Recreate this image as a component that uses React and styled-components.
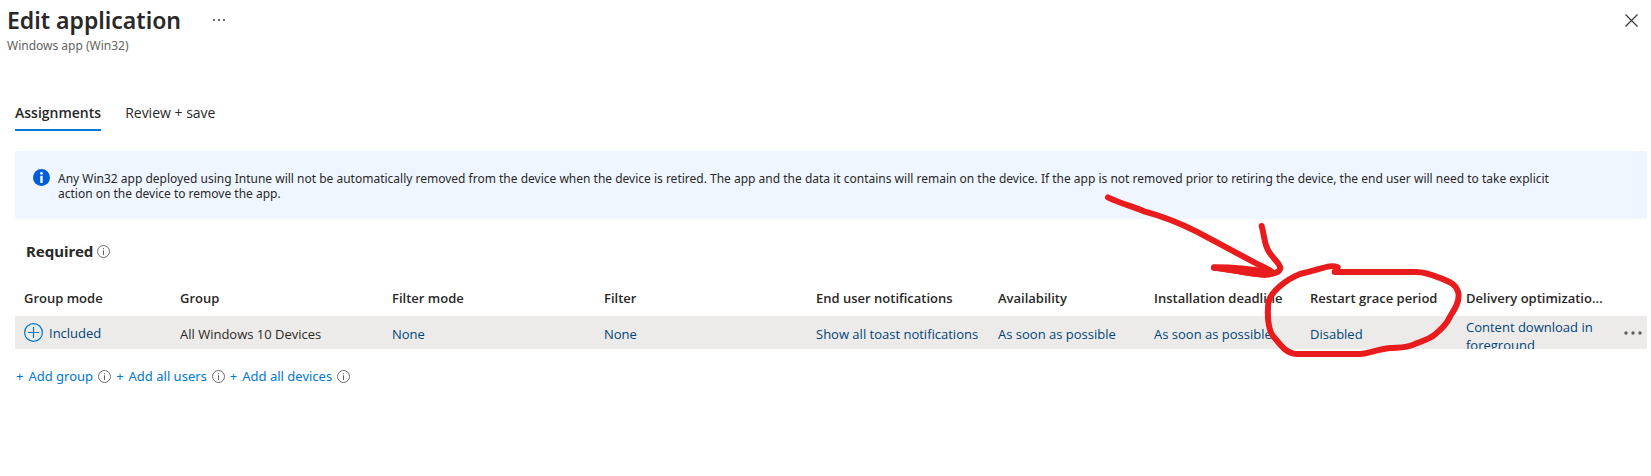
import React from 'react';
import styled, { createGlobalStyle } from 'styled-components';

const GlobalStyle = createGlobalStyle`
  * { box-sizing: border-box; }
  body {
    margin: 0;
    background: #ffffff;
    color: #292827;
    font-family: "Noto Sans", "Open Sans", sans-serif;
    font-size: 13px;
  }
  button {
    border: 0;
    padding: 0;
    background: none;
    font: inherit;
    color: inherit;
    cursor: pointer;
  }
`;

const Page = styled.div`
  position: relative;
  min-width: 1100px;
`;

const Header = styled.header`
  display: flex;
  justify-content: space-between;
  align-items: flex-start;
  padding: 4px 8px 0 7px;
`;

const TitleRow = styled.div`
  display: flex;
  align-items: center;
  gap: 30px;
`;

const Title = styled.h1`
  margin: 0;
  font-size: 23px;
  line-height: 30px;
  font-weight: 600;
`;

const Subtitle = styled.p`
  margin: 0;
  font-size: 12px;
  line-height: 20px;
  color: #646260;
`;

const IconButton = styled.button`
  display: flex;
  align-items: center;
  justify-content: center;
  width: ${(p) => p.$width || 16}px;
  height: 32px;
`;

const Tabs = styled.div`
  display: flex;
  gap: 24px;
  margin-top: 40px;
  padding: 0 15px;
`;

const Tab = styled.button`
  && {
    padding: 6px 0 5px;
    border-bottom: 2px solid ${(p) => (p.$active ? '#0078d4' : 'transparent')};
    font-size: 14px;
    line-height: 22px;
    font-family: "Open Sans", "Noto Sans", sans-serif;
    font-weight: ${(p) => (p.$active ? 600 : 400)};
  }
`;

const Main = styled.main`
  padding: 20px 4px 0 15px;
`;

const Notice = styled.section`
  display: flex;
  align-items: flex-start;
  gap: 8px;
  padding: 18px 64px 18px 18px;
  border-radius: 2px;
  background: #eff6ff;
`;

const IconSlot = styled.span`
  display: flex;
  flex: none;
`;

const NoticeText = styled.p`
  margin: 0;
  padding: 2px 0 0;
  font-size: 12px;
  line-height: 15px;
`;

const SectionTitle = styled.h2`
  display: flex;
  align-items: center;
  gap: 4px;
  margin: 0;
  padding: 20px 11px 0;
  font-size: 15px;
  line-height: 24px;
  font-weight: 700;
`;

const Table = styled.table`
  width: 100%;
  margin-top: 16px;
  table-layout: fixed;
  border-collapse: collapse;
  font-family: "Open Sans", "Noto Sans", sans-serif;
`;

const Col = styled.col`
  width: ${(p) => p.$width}px;
`;

const HeadCell = styled.th`
  height: 37px;
  padding: 0 4px 0 9px;
  text-align: left;
  font-weight: 600;
  line-height: 18px;
  overflow: hidden;
  white-space: nowrap;
  text-overflow: ellipsis;
`;

const BodyRow = styled.tr`
  background: #edebe9;
`;

const Cell = styled.td`
  height: 33px;
  padding: 0 0 0 9px;
  vertical-align: middle;
`;

const CellContent = styled.div`
  display: flex;
  align-items: center;
  gap: 6px;
  padding-top: ${(p) => (p.$icon ? 0 : 2)}px;
  line-height: 18px;
`;

const TwoLineContent = styled.div`
  height: 33px;
  padding: 2px 8px 0 0;
  line-height: 18px;
  overflow: hidden;
`;

const CellLink = styled.a`
  color: #004578;
  text-decoration: none;
  white-space: ${(p) => (p.$wrap ? 'normal' : 'nowrap')};
`;

const Actions = styled.div`
  display: flex;
  align-items: center;
  gap: 5px;
  padding: 18px 1px 0;
  font-size: 13px;
  line-height: 18px;
`;

const AddLink = styled.a`
  display: flex;
  gap: 5px;
  color: #0078d4;
  text-decoration: none;
`;

const Ink = styled.svg`
  position: absolute;
  top: 180px;
  right: 171px;
  width: 400px;
  height: 190px;
  pointer-events: none;
`;

const InfoOutline = () => (
  <svg width="13" height="13" viewBox="0 0 13 13" fill="none" stroke="#605e5c" aria-hidden="true">
    <circle cx="6.5" cy="6.5" r="6" strokeWidth="0.9" />
    <path d="M6.5 5.4V10M6.5 3.2V4.3" />
  </svg>
);

const InfoSolid = () => (
  <svg width="17" height="17" viewBox="0 0 17 17" aria-hidden="true">
    <circle cx="8.5" cy="8.5" r="8.5" fill="#015cda" />
    <circle cx="8.5" cy="4.3" r="1.4" fill="#fff" />
    <path d="M7.3 6.8h2.4v7.2H7.3z" fill="#fff" />
  </svg>
);

const PlusCircle = () => (
  <svg width="19" height="19" viewBox="0 0 19 19" fill="none" stroke="#0078d4" aria-hidden="true">
    <circle cx="9.5" cy="9.5" r="8.9" strokeWidth="1.2" />
    <path d="M9.5 4v11M4 9.5h11" strokeWidth="1.2" />
  </svg>
);

const Dots = ({ width, height, r, step, color }) => (
  <svg width={width} height={height} viewBox={`0 0 ${width} ${height}`} fill={color} aria-hidden="true">
    {[-1, 0, 1].map((i) => (
      <circle key={i} cx={width / 2 + i * step} cy={height / 2} r={r} />
    ))}
  </svg>
);

const columns = [
  ['Group mode', 156],
  ['Group', 212],
  ['Filter mode', 212],
  ['Filter', 212],
  ['End user notifications', 182],
  ['Availability', 156],
  ['Installation deadline', 156],
  ['Restart grace period', 156],
  ['Delivery optimization priority', 156],
];

const linkCells = [
  'None',
  'None',
  'Show all toast notifications',
  'As soon as possible',
  'As soon as possible',
  'Disabled',
];

const addLinks = ['Add group', 'Add all users', 'Add all devices'];

export default function App() {
  return (
    <Page>
      <GlobalStyle />
      <Header>
        <div>
          <TitleRow>
            <Title>Edit application</Title>
            <IconButton type="button" aria-label="More options">
              <Dots width={14} height={4} r={0.9} step={5} color="#292827" />
            </IconButton>
          </TitleRow>
          <Subtitle>Windows app (Win32)</Subtitle>
        </div>
        <IconButton type="button" aria-label="Close" $width={24}>
          <svg width="13" height="13" viewBox="0 0 13 13" stroke="#3b3a39" strokeWidth="1.2" aria-hidden="true">
            <path d="M0.5 0.5l12 12M12.5 0.5l-12 12" />
          </svg>
        </IconButton>
      </Header>

      <Tabs role="tablist">
        <Tab type="button" role="tab" aria-selected="true" $active>Assignments</Tab>
        <Tab type="button" role="tab" aria-selected="false">Review + save</Tab>
      </Tabs>

      <Main>
        <Notice>
          <IconSlot><InfoSolid /></IconSlot>
          <NoticeText>
            Any Win32 app deployed using Intune will not be automatically removed from the device when
            the device is retired. The app and the data it contains will remain on the device. If the app
            is not removed prior to retiring the device, the end user will need to take explicit action on
            the device to remove the app.
          </NoticeText>
        </Notice>

        <SectionTitle>
          Required
          <InfoOutline />
        </SectionTitle>

        <Table>
          <colgroup>
            {columns.map(([name, width]) => <Col key={name} $width={width} />)}
            <Col $width={34} />
          </colgroup>
          <thead>
            <tr>
              {columns.map(([name]) => <HeadCell key={name} scope="col">{name}</HeadCell>)}
              <td />
            </tr>
          </thead>
          <tbody>
            <BodyRow>
              <Cell>
                <CellContent $icon>
                  <PlusCircle />
                  <CellLink href="#included">Included</CellLink>
                </CellContent>
              </Cell>
              <Cell><CellContent>All Windows 10 Devices</CellContent></Cell>
              {linkCells.map((text, i) => (
                <Cell key={i}>
                  <CellContent><CellLink href="#edit">{text}</CellLink></CellContent>
                </Cell>
              ))}
              <Cell>
                <TwoLineContent>
                  <CellLink href="#delivery" $wrap>Content download in foreground</CellLink>
                </TwoLineContent>
              </Cell>
              <Cell>
                <IconButton type="button" aria-label="Row actions" $width={22}>
                  <Dots width={18} height={6} r={1.7} step={7} color="#605e5c" />
                </IconButton>
              </Cell>
            </BodyRow>
          </tbody>
        </Table>

        <Actions>
          {addLinks.map((text) => (
            <React.Fragment key={text}>
              <AddLink href="#add"><span>+</span><span>{text}</span></AddLink>
              <InfoOutline />
            </React.Fragment>
          ))}
        </Actions>
      </Main>

      <Ink viewBox="0 0 1200 570" fill="none" stroke="#e81c1c" strokeWidth="18" strokeLinecap="round" strokeLinejoin="round" aria-hidden="true">
        <path d="M84 52C120 70 160 80 195 95C260 112 300 130 350 155L440 203L530 251C550 260 570 270 578 278" />
        <path d="M545 138C553 165 552 190 565 212C578 235 600 250 601 264C600 276 580 284 555 284C500 282 460 268 402 263" />
        <path d="M402 262C450 262 500 264 560 276L555 284C500 282 450 266 402 263Z" fill="#e81c1c" />
        <path d="M773 262C750 252 730 266 660 282C620 298 570 335 565 370C560 420 568 460 585 475C605 500 620 520 650 522L840 522C870 520 890 508 930 504C960 502 980 504 1000 494C1030 482 1050 476 1063 465C1085 447 1100 432 1110 410C1125 385 1136 370 1136 345C1132 310 1100 302 1080 294C1050 282 1030 276 1010 276L764 276" />
      </Ink>
    </Page>
  );
}
